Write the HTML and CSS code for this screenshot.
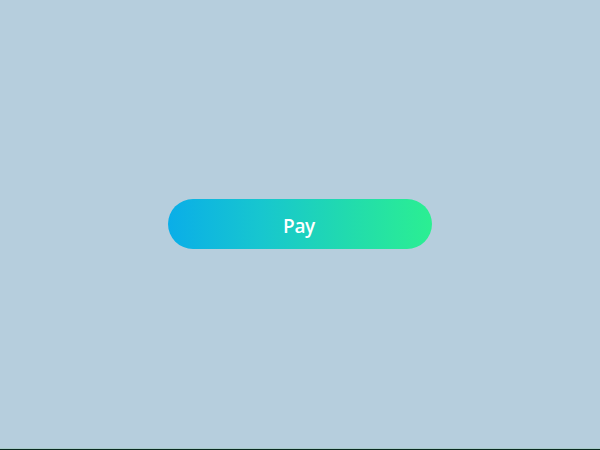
FILE: index.html
```html
<!DOCTYPE html>
<html lang="en">
<head>
<meta charset="utf-8">
<title>Pay</title>
<link rel="stylesheet" href="styles.css">
</head>
<body>
<main class="stage">
  <button class="pay-btn" type="button">Pay</button>
</main>
<div class="edge"></div>
</body>
</html>
```
FILE: styles.css
```css
html, body {
  margin: 0;
  padding: 0;
  height: 100%;
}
body {
  background: #b6cedd;
  display: flex;
  flex-direction: column;
  font-family: "Open Sans", "Noto Sans", sans-serif;
}
.stage {
  flex: 1;
  display: flex;
  align-items: center;
  justify-content: center;
}
.pay-btn {
  width: 264px;
  height: 50px;
  border: none;
  border-radius: 25px;
  background: linear-gradient(90deg, #0aaee8 0%, #17c6cf 35%, #22dcac 70%, #2bef92 100%);
  color: #ffffff;
  font-family: "Open Sans", "Noto Sans", sans-serif;
  font-weight: 600;
  font-size: 19px;
  letter-spacing: -0.3px;
  padding: 3px 2px 0 0;
  cursor: pointer;
}
.edge {
  height: 1px;
  background: #0a2a20;
  border-top: 1px solid #a9cbc9;
}
```
